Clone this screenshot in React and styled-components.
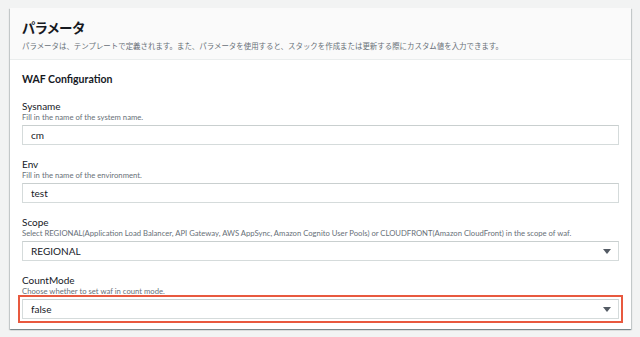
import React from "react";
import styled, { createGlobalStyle } from "styled-components";

const GlobalStyle = createGlobalStyle`
  html, body {
    margin: 0;
    padding: 0;
    background: #f2f3f3;
  }
  body {
    font-family: Lato, "Noto Sans CJK JP", sans-serif;
    color: #16191f;
  }
`;

const Page = styled.div`
  padding: 8px 9px 0 10px;
  height: 337px;
  box-sizing: border-box;
`;

const Card = styled.section`
  background: #ffffff;
  box-shadow: 0 1px 1px 0 rgba(0, 28, 36, 0.3), 1px 1px 1px 0 rgba(0, 28, 36, 0.15),
    -1px 1px 1px 0 rgba(0, 28, 36, 0.15);
`;

const Header = styled.header`
  background: #fafafa;
  border-bottom: 1px solid #eaeded;
  padding: 11px 12px 0 12px;
  height: 52px;
  box-sizing: border-box;
`;

const Title = styled.h2`
  margin: 0;
  font-family: "Noto Sans CJK JP", sans-serif;
  font-feature-settings: "palt";
  font-size: 13.5px;
  line-height: 17px;
  font-weight: 700;
  color: #16191f;
`;

const Subtitle = styled.p`
  margin: 5px 0 0;
  font-family: "Noto Sans CJK JP", sans-serif;
  font-size: 7.45px;
  line-height: 10px;
  color: #687078;
`;

const Body = styled.div`
  padding: 11px 12px 10px 12px;
  display: flex;
  flex-direction: column;
  gap: 13px;
`;

const SectionTitle = styled.h3`
  margin: 0;
  font-size: 10.5px;
  line-height: 16px;
  font-weight: 700;
  color: #16191f;
`;

const Field = styled.div`
  display: flex;
  flex-direction: column;
`;

const Label = styled.label`
  font-size: 10px;
  line-height: 12px;
  color: #16191f;
`;

const Description = styled.div`
  font-size: 7.7px;
  line-height: 11px;
  color: #687078;
`;

const Control = styled.div`
  position: relative;
  margin-top: 2px;
  height: 20px;
  box-sizing: border-box;
  border: 1px solid #d5dbdb;
  border-top-color: #c9cfcf;
  background: #ffffff;
  display: flex;
  align-items: center;
  padding: 0 8px;
  font-size: 10px;
  color: #16191f;
  outline: ${(p) => (p.$highlight ? "2px solid #e8593f" : "none")};
  outline-offset: 2px;
`;

const Arrow = styled.span`
  position: absolute;
  right: 7px;
  top: 50%;
  margin-top: -2px;
  width: 0;
  height: 0;
  border-left: 4px solid transparent;
  border-right: 4px solid transparent;
  border-top: 5px solid #545b64;
`;

const fields = [
  { label: "Sysname", desc: "Fill in the name of the system name.", value: "cm" },
  { label: "Env", desc: "Fill in the name of the environment.", value: "test" },
  {
    label: "Scope",
    desc:
      "Select REGIONAL(Application Load Balancer, API Gateway, AWS AppSync, Amazon Cognito User Pools) or CLOUDFRONT(Amazon CloudFront) in the scope of waf.",
    value: "REGIONAL",
    select: true,
  },
  {
    label: "CountMode",
    desc: "Choose whether to set waf in count mode.",
    value: "false",
    select: true,
    highlight: true,
  },
];

export default function App() {
  return (
    <>
      <GlobalStyle />
      <Page>
        <Card>
          <Header>
            <Title>パラメータ</Title>
            <Subtitle>
              パラメータは、テンプレートで定義されます。また、パラメータを使用すると、スタックを作成または更新する際にカスタム値を入力できます。
            </Subtitle>
          </Header>
          <Body>
            <SectionTitle>WAF Configuration</SectionTitle>
            {fields.map((f) => (
              <Field key={f.label}>
                <Label>{f.label}</Label>
                <Description>{f.desc}</Description>
                <Control $highlight={f.highlight}>
                  {f.value}
                  {f.select && <Arrow />}
                </Control>
              </Field>
            ))}
          </Body>
        </Card>
      </Page>
    </>
  );
}
